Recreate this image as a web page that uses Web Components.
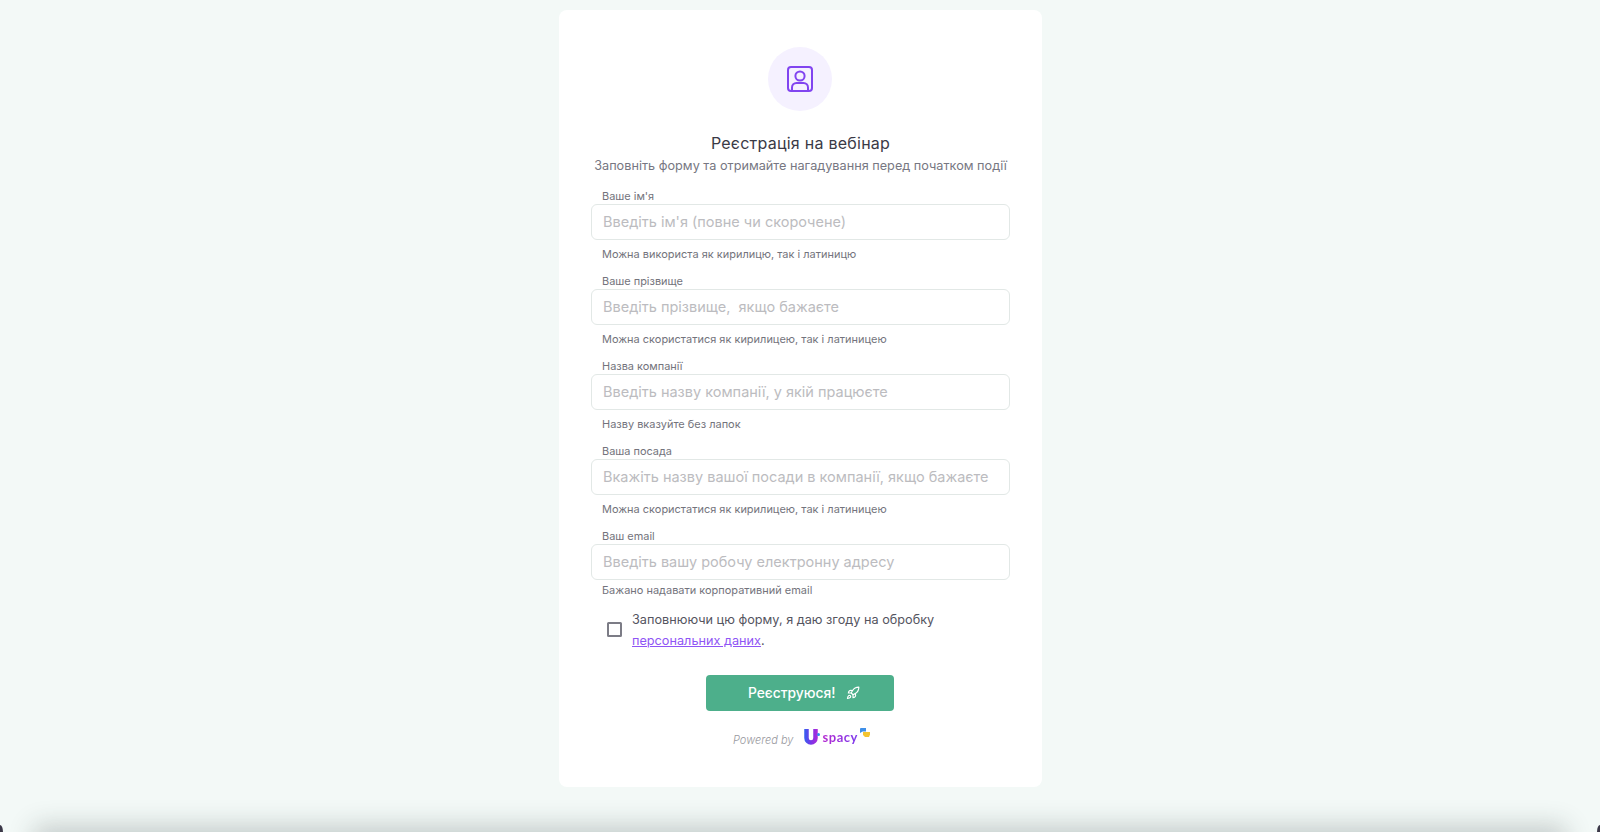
<!DOCTYPE html>
<html lang="uk">
<head>
<meta charset="utf-8">
<title>Реєстрація на вебінар</title>
<style>
  html, body { margin: 0; height: 100%; background: #f3f9f7; overflow: hidden; }
  body { font-family: Inter, "Noto Sans", sans-serif; }
</style>
</head>
<body>
<webinar-page>
  <register-card>
    <form-field label="Ваше ім'я" placeholder="Введіть ім'я (повне чи скорочене)" hint="Можна використа як кирилицю, так і латиницю"></form-field>
    <form-field label="Ваше прізвище" placeholder="Введіть прізвище,  якщо бажаєте" hint="Можна скористатися як кирилицею, так і латиницею"></form-field>
    <form-field label="Назва компанії" placeholder="Введіть назву компанії, у якій працюєте" hint="Назву вказуйте без лапок"></form-field>
    <form-field label="Ваша посада" placeholder="Вкажіть назву вашої посади в компанії, якщо бажаєте" hint="Можна скористатися як кирилицею, так і латиницею"></form-field>
    <form-field last label="Ваш email" placeholder="Введіть вашу робочу електронну адресу" hint="Бажано надавати корпоративний email"></form-field>
    <consent-check></consent-check>
    <submit-button>Реєструюся!</submit-button>
    <powered-by></powered-by>
  </register-card>
</webinar-page>

<script>
class WebinarPage extends HTMLElement {
  constructor() {
    super();
    var shadow = this.attachShadow({mode: 'open'});
    shadow.innerHTML = '<style>' +
    ':host { display: flex; flex-direction: column; align-items: center; height: 832px; padding-top: 10px; box-sizing: border-box; position: relative; overflow: hidden; }' +
    // window shadow that comes in from the bottom edge
    '.edge { position: absolute; left: 40px; right: 40px; bottom: -24px; height: 24px; box-shadow: 0 0 26px 6px rgba(40,50,50,.23); }' +
    '.corner { position: absolute; bottom: 0; width: 3px; height: 7px; background: #3b3848; }' +
    '.corner.l { left: 0; border-top-right-radius: 100% 100%; }' +
    '.corner.r { right: 0; border-top-left-radius: 100% 100%; }' +
    '</style><slot></slot><div class="edge"></div><div class="corner l"></div><div class="corner r"></div>';
  }
}

class RegisterCard extends HTMLElement {
  constructor() {
    super();
    var shadow = this.attachShadow({mode: 'open'});
    shadow.innerHTML = '<style>' +
    ':host { display: flex; flex-direction: column; width: 483px; height: 777px; margin-left: 1px; box-sizing: border-box; padding: 37px 32px 0 32px; background: #fff; border-radius: 8px; position: relative; z-index: 1; }' +
    '.badge { width: 64px; height: 64px; border-radius: 50%; background: #f5f1ff; align-self: center; display: flex; align-items: center; justify-content: center; margin-left: -1px; }' +
    'h1 { margin: 22px 0 0; font-size: 16px; line-height: 20px; font-weight: 400; letter-spacing: .25px; color: #3a3a46; text-align: center; }' +
    'p { margin: 4px 0 14px; font-size: 12.7px; line-height: 18px; color: #777782; text-align: center; white-space: nowrap; }' +
    '</style>' +
    '<div class="badge"><svg width="28" height="28" viewBox="0 0 28 28" fill="none" stroke="#8144f0" stroke-width="2"><rect x="2" y="2" width="24" height="24" rx="3"/><circle cx="14" cy="11" r="4.600"/><path d="M6 25v-2.500c0-2.500 2-4.500 4.500-4.500h7c2.500 0 4.500 2 4.500 4.500V25"/></svg></div>' +
    '<h1>Реєстрація на вебінар</h1>' +
    '<p>Заповніть форму та отримайте нагадування перед початком події</p>' +
    '<slot></slot>';
  }
}

class FormField extends HTMLElement {
  constructor() {
    super();
    this.attachShadow({mode: 'open'});
  }
  connectedCallback() {
    this.shadowRoot.innerHTML = '<style>' +
    ':host { display: block; height: 85px; }' +
    ':host([last]) { height: 77px; }' +
    ':host([last]) small { margin-top: 3px; }' +
    'label { display: block; margin-left: 11px; padding-top: 1px; font-size: 10.95px; line-height: 13px; color: #73737c; }' +
    'input { display: block; box-sizing: border-box; width: 419px; height: 36px; margin-top: 1px; padding: 0 11px 1px; border: 1.5px solid #e2e8e6; border-radius: 6px; background: #fff; font: 400 14.5px Inter, sans-serif; outline: 0; }' +
    'input::placeholder { color: #bcbcc0; opacity: 1; }' +
    'small { display: block; margin: 7px 0 0 11px; font-size: 10.98px; line-height: 14px; color: #73737c; }' +
    '</style>' +
    '<label>' + this.getAttribute('label') + '</label>' +
    '<input type="text" placeholder="' + this.getAttribute('placeholder') + '">' +
    '<small>' + this.getAttribute('hint') + '</small>';
  }
}

class ConsentCheck extends HTMLElement {
  constructor() {
    super();
    var shadow = this.attachShadow({mode: 'open'});
    shadow.innerHTML = '<style>' +
    ':host { display: flex; align-items: center; margin: 0 0 0 16px; height: 48px; gap: 10px; }' +
    '.box { width: 11px; height: 11px; border: 2px solid #7c7c86; border-radius: 1.5px; flex: none; margin-top: -1px; }' +
    'span { font-size: 12.7px; line-height: 21.5px; color: #55555f; }' +
    'a { color: #8f55f5; text-decoration: underline; }' +
    '</style>' +
    '<div class="box"></div><span>Заповнюючи цю форму, я даю згоду на обробку<br><a href="#">персональних даних</a>.</span>';
  }
}

class SubmitButton extends HTMLElement {
  constructor() {
    super();
    var shadow = this.attachShadow({mode: 'open'});
    shadow.innerHTML = '<style>' +
    ':host { display: flex; align-self: center; align-items: center; gap: 11px; width: 188px; height: 36px; margin: 21px 0 0 -1px; padding-left: 42px; box-sizing: border-box; background: #4daf8b; border-radius: 4px; color: #fff; font-size: 13.8px; font-weight: 500; }' +
    '</style><slot></slot>' +
    '<svg width="14" height="14" viewBox="0 0 24 24" fill="none" stroke="#fff" stroke-width="2" stroke-linecap="round" stroke-linejoin="round"><path d="M4.500 16.500c-1.500 1.260-2 5-2 5s3.740-.5 5-2c.71-.84.7-2.130-.09-2.910a2.180 2.180 0 0 0-2.910-.09z"/><path d="M12 15l-3-3a22 22 0 0 1 2-3.950A12.880 12.880 0 0 1 22 2c0 2.720-.78 7.500-6 11a22.350 22.350 0 0 1-4 2z"/><path d="M9 12H4s.55-3.030 2-4c1.620-1.080 5 0 5 0"/><path d="M12 15v5s3.030-.55 4-2c1.080-1.620 0-5 0-5"/></svg>';
  }
}

class PoweredBy extends HTMLElement {
  constructor() {
    super();
    var shadow = this.attachShadow({mode: 'open'});
    shadow.innerHTML = '<style>' +
    ':host { display: flex; align-self: flex-start; align-items: flex-start; margin: 16px 0 0 142px; height: 30px; }' +
    'em { font-size: 11px; line-height: 14px; margin-top: 6px; color: #98989e; font-weight: 300; }' +
    '.logo { display: flex; align-items: flex-start; margin-left: 11px; }' +
    '.mark { margin-top: 2px; }' +
    'b { font: 700 13px/14px Lato, sans-serif; letter-spacing: .55px; margin: 3px 0 0 2px; background: linear-gradient(90deg, #b52ad0, #7c3aed); -webkit-background-clip: text; background-clip: text; color: transparent; }' +
    '.flag { margin: 1px 0 0 1px; }' +
    '</style>' +
    '<em>Powered by</em><div class="logo">' +
    '<svg class="mark" width="16" height="16" viewBox="0 0 16 16" fill="none"><defs><linearGradient id="u" gradientUnits="userSpaceOnUse" x1="0" y1="0" x2="14" y2="0"><stop offset="0" stop-color="#2f62f0"/><stop offset=".5" stop-color="#7a35e8"/><stop offset="1" stop-color="#b02ad8"/></linearGradient></defs><path d="M2.500 0v9a4.500 4.500 0 0 0 9 0V0" stroke="url(#u)" stroke-width="4.500"/><circle cx="14.500" cy="5.500" r="1.500" fill="#2f8cf0"/></svg>' +
    '<b>spacy</b>' +
    '<svg class="flag" width="11" height="10" viewBox="0 0 11 10"><path d="M1.500 0h5.500v3.500H3.500L1 5V1z" fill="#3f8fe8"/><path d="M4 4h7v2.500L10 9H6L4 7z" fill="#f4c430"/></svg>' +
    '</div>';
  }
}

customElements.define('webinar-page', WebinarPage);
customElements.define('register-card', RegisterCard);
customElements.define('form-field', FormField);
customElements.define('consent-check', ConsentCheck);
customElements.define('submit-button', SubmitButton);
customElements.define('powered-by', PoweredBy);
</script>
</body>
</html>
